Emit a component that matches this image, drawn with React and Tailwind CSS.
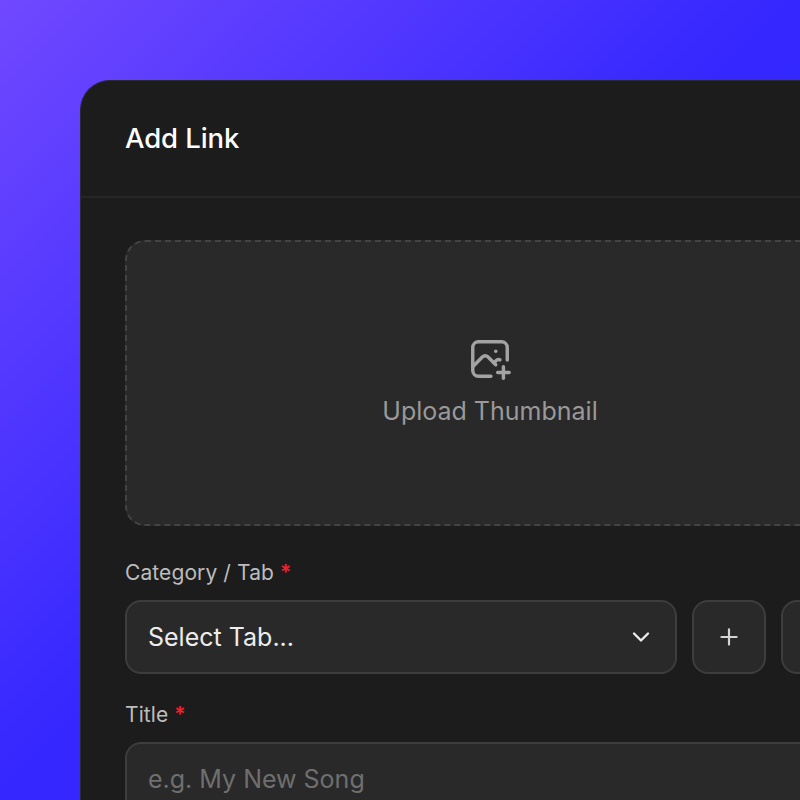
import React from "react";
import { TbPhotoPlus } from "react-icons/tb";
import { ChevronDown, Plus, Pencil } from "lucide-react";

const font = "font-['Inter',sans-serif]";

function Label({ children }) {
  return (
    <label className="block pt-[1px] h-[28px] text-[21px] leading-[28px] tracking-[0.1px] text-[#bcbcbc]">
      {children} <span className="font-semibold text-[#f0202f]">*</span>
    </label>
  );
}

export default function App() {
  return (
    <div className={`h-screen w-screen overflow-hidden bg-[linear-gradient(135deg,#7048ff_0%,#3427ff_50%,#3227ff_100%)] pt-20 pl-20 ${font}`}>
      <div className="w-[819px] h-[820px] rounded-t-[30px] border-l border-t border-[#2a2a32] bg-[#1c1c1c] overflow-hidden">
        <header className="h-[117px] flex items-center px-[44px] pt-[1px] border-b-2 border-[#262626]">
          <h1 className="text-[27.5px] font-[450] tracking-[-0.1px] text-white">Add Link</h1>
        </header>
        <main className="px-[44px] pt-[42px]">
          <div className="h-[286px] rounded-[20px] border-2 border-dashed border-[#434343] bg-[#292929] flex flex-col items-center justify-center pb-[4px]">
            <TbPhotoPlus className="text-[#a3a3a3] mb-[13px]" size={46} strokeWidth={1.8} />
            <span className="text-[25px] leading-[32px] text-[#999999]">Upload Thumbnail</span>
          </div>
          <div className="mt-[32px]">
            <Label>Category / Tab</Label>
            <div className="mt-[14px] flex gap-[15px]">
              <button className="flex-1 h-[74px] rounded-[16px] border-2 border-[#3d3d3d] bg-[#292929] flex items-center justify-between pl-[21px] pr-[20px] text-[25px] text-[#ededed]">
                <span className="pt-[1px]">Select Tab...</span>
                <ChevronDown className="text-[#ededed]" size={28} strokeWidth={2} />
              </button>
              <button className="w-[74px] h-[74px] rounded-[16px] border-2 border-[#3d3d3d] bg-[#292929] flex items-center justify-center text-[#d4d4d4]">
                <Plus size={26} strokeWidth={2} />
              </button>
              <button className="w-[74px] h-[74px] rounded-[16px] border-2 border-[#3d3d3d] bg-[#292929] flex items-center justify-center text-[#d4d4d4]">
                <Pencil size={24} strokeWidth={2} />
              </button>
            </div>
          </div>
          <div className="mt-[26px]">
            <Label>Title</Label>
            <div className="mt-[14px] h-[74px] rounded-[16px] border-2 border-[#3d3d3d] bg-[#292929] flex items-center pl-[21px] pt-[2px] text-[25px] text-[#6f6f6f]">
              e.g. My New Song
            </div>
          </div>
        </main>
      </div>
    </div>
  );
}
